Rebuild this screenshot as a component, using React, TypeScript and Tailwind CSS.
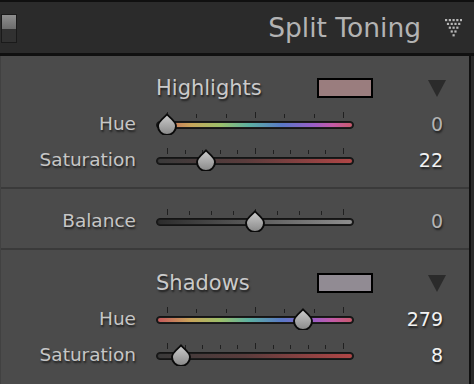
import React, { useId } from "react";

const TS = "[text-shadow:1px_2px_2px_rgba(0,0,0,0.6)]";

function Thumb({ frac }: { frac: number }) {
  const id = useId().replace(/:/g, "");
  return (
    <svg
      width="22"
      height="22"
      viewBox="0 0 22 22"
      className="absolute top-[1px]"
      style={{ left: `${frac * 176}px` }}
    >
      <defs>
        <linearGradient id={`g${id}`} x1="0" y1="0" x2="0" y2="1">
          <stop offset="0" stopColor="#cdcdcd" />
          <stop offset="1" stopColor="#888888" />
        </linearGradient>
      </defs>
      <path
        d="M11 1.2 C12.8 4, 20 8, 20 13 A9 9 0 0 1 2 13 C2 8, 9.2 4, 11 1.2 Z"
        fill={`url(#g${id})`}
        stroke="#0a0a0a"
        strokeWidth="1.9"
        strokeLinejoin="round"
      />
    </svg>
  );
}

function Slider({
  kind,
  ticks,
  frac,
}: {
  kind: "hue" | "sat" | "bal";
  ticks: number;
  frac: number;
}) {
  const trackBg =
    kind === "hue"
      ? "bg-[linear-gradient(to_right,#c65a5c_0%,#c8a55a_17%,#9cbf6a_32%,#5cb0a2_47%,#5a78c6_64%,#9a5ec6_80%,#c35aa6_90%,#c85a6c_100%)]"
      : kind === "sat"
      ? "bg-[linear-gradient(to_right,#3a3a3a_0%,#5a3c3c_45%,#b04646_100%)]"
      : "bg-[linear-gradient(to_right,#2c2c2c_0%,#5c5c5c_50%,#8e8e8e_100%)]";
  const items = Array.from({ length: ticks + 1 }, (_, i) => i);
  return (
    <div className="relative w-[198px] h-[24px] shrink-0">
      <div className="absolute left-[11px] w-[177px] top-0 h-[6px] flex justify-between items-end">
        {items.map((i) => {
          const tall = i === 0 || i === ticks || i * 2 === ticks;
          return (
            <div
              key={i}
              className={`w-[1px] bg-[#202020] ${tall ? "h-[6px]" : "h-[4px]"}`}
            />
          );
        })}
      </div>
      <div className="absolute left-0 right-0 top-[8.5px] h-[8px] rounded-full border border-[#141414] p-[1px] bg-[#1c1c1c]">
        <div className={`w-full h-full rounded-full ${trackBg}`} />
      </div>
      <Thumb frac={frac} />
    </div>
  );
}

function Row({
  label,
  kind,
  ticks,
  value,
  max,
}: {
  label: string;
  kind: "hue" | "sat" | "bal";
  ticks: number;
  value: number;
  max: number;
}) {
  const frac = kind === "bal" ? (value + 100) / 200 : value / max;
  return (
    <div className="h-[36px] flex items-center">
      <div
        className={`w-[135px] text-right text-[18.5px] leading-none text-[#c6c6c6] ${TS}`}
      >
        {label}
      </div>
      <div className="w-[20px]" />
      <Slider kind={kind} ticks={ticks} frac={frac} />
      <div
        className={`flex-1 text-right pr-[26px] text-[19px] leading-none ${
          value === 0 ? "text-[#b4b4b4]" : "text-[#f2f2f2]"
        } ${TS}`}
      >
        {value}
      </div>
    </div>
  );
}

function SectionHead({ label, swatch }: { label: string; swatch: string }) {
  return (
    <div className="h-[36px] flex items-center">
      <div className="w-[155px]" />
      <div
        className={`w-[161px] text-[21px] leading-none text-[#cacaca] ${TS}`}
      >
        {label}
      </div>
      <div className={`w-[56px] h-[20px] border-2 border-black ${swatch}`} />
      <div className="flex-1" />
      <svg width="18" height="18" viewBox="0 0 18 18" className="mr-[23px]">
        <path d="M0 1 H18 L9 18 Z" fill="#2b2b2b" />
      </svg>
    </div>
  );
}

function Dots() {
  const dots: React.ReactNode[] = [];
  for (let r = 0; r < 5; r++) {
    for (let c = 0; c < 5 - r; c++) {
      dots.push(
        <rect
          key={`${r}-${c}`}
          x={r * 1.875 + c * 3.75}
          y={r * 3.8}
          width="2.2"
          height="2.2"
          fill="#b8b8b8"
        />
      );
    }
  }
  return (
    <svg width="17" height="18" viewBox="0 0 17 18" className="mt-[1px]">
      {dots}
    </svg>
  );
}

export default function App() {
  return (
    <div className="w-[474px] h-[384px] overflow-hidden bg-[#2b2b2b] flex flex-col font-['DejaVu_Sans',sans-serif]">
      <div className="h-[2px] bg-[#101010] shrink-0" />
      <div className="h-[51px] shrink-0 flex items-center bg-[#2b2b2b]">
        <div className="ml-[1px] w-[16px] h-[29px] border border-[#1a1a1a] flex flex-col mt-[2px]">
          <div className="flex-1 bg-[linear-gradient(to_bottom,#8e8e8e,#6c6c6c)]" />
          <div className="flex-1 bg-[#313131]" />
        </div>
        <div className="flex-1" />
        <div className="text-[26.5px] leading-none text-[#b3b3b3] pt-[2px]">
          Split Toning
        </div>
        <div className="w-[24px]" />
        <Dots />
        <div className="w-[12px]" />
      </div>
      <div className="h-[3px] bg-[#101010] shrink-0" />
      <div className="flex-1 flex">
        <div className="w-[469px] bg-[#4b4b4b] border-l border-[#414141] flex flex-col">
          <div className="pt-[14px] pb-[9px]">
            <SectionHead label="Highlights" swatch="bg-[#9a7d7e]" />
            <Row label="Hue" kind="hue" ticks={6} value={0} max={360} />
            <Row label="Saturation" kind="sat" ticks={10} value={22} max={100} />
          </div>
          <div className="h-[2px] bg-[#3a3a3a]" />
          <div className="pt-[14px] pb-[9px]">
            <Row label="Balance" kind="bal" ticks={8} value={0} max={100} />
          </div>
          <div className="h-[2px] bg-[#3a3a3a]" />
          <div className="pt-[15px]">
            <SectionHead label="Shadows" swatch="bg-[#918b93]" />
            <Row label="Hue" kind="hue" ticks={6} value={279} max={360} />
            <Row label="Saturation" kind="sat" ticks={10} value={8} max={100} />
          </div>
        </div>
        <div className="w-[2px] bg-[#101010]" />
        <div className="flex-1 bg-[#2b2b2b]" />
      </div>
    </div>
  );
}
